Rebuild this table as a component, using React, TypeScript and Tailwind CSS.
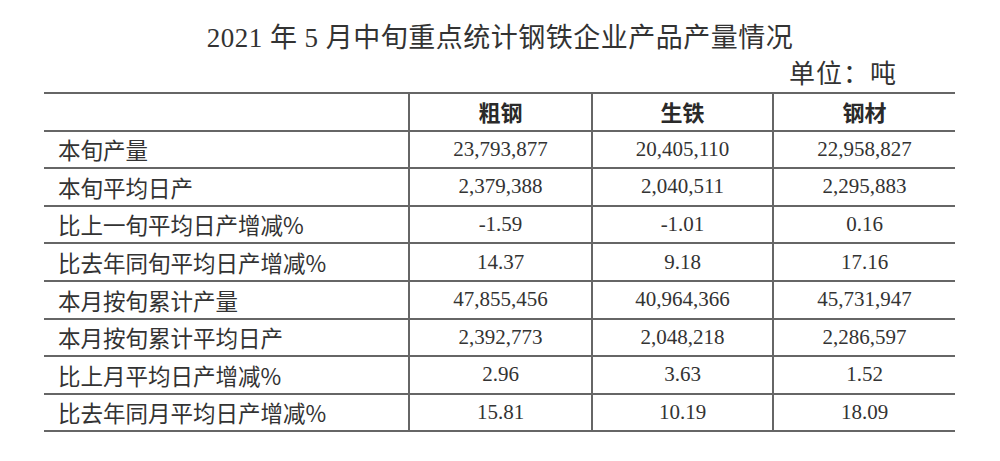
const COLS = ["粗钢", "生铁", "钢材"];

const ROWS: [string, string, string, string][] = [
  ["本旬产量", "23,793,877", "20,405,110", "22,958,827"],
  ["本旬平均日产", "2,379,388", "2,040,511", "2,295,883"],
  ["比上一旬平均日产增减%", "-1.59", "-1.01", "0.16"],
  ["比去年同旬平均日产增减%", "14.37", "9.18", "17.16"],
  ["本月按旬累计产量", "47,855,456", "40,964,366", "45,731,947"],
  ["本月按旬累计平均日产", "2,392,773", "2,048,218", "2,286,597"],
  ["比上月平均日产增减%", "2.96", "3.63", "1.52"],
  ["比去年同月平均日产增减%", "15.81", "10.19", "18.09"],
];

const serif = "font-['Liberation_Serif','Noto_Sans_CJK_SC',serif]";
const sans = "font-['Noto_Sans_CJK_SC','Liberation_Sans',sans-serif]";

export default function App() {
  return (
    <div className="w-[1000px] h-[461px] bg-white text-[#333] overflow-hidden">
      {/* Title */}
      <div className="pt-[24px] h-[52px] flex justify-center">
        <h1 className={`${serif} text-[27px] leading-[28px] font-normal tracking-[0.5px]`}>
          2021 年 5 月中旬重点统计钢铁企业产品产量情况
        </h1>
      </div>
      <div className="h-[40px] flex justify-end items-center pr-[103px] pt-[5px]">
        <span className={`${serif} text-[26px] leading-none tracking-[1px]`}>单位：吨</span>
      </div>

      {/* Table */}
      <div className="ml-[44px] w-[911px]">
        <table className="w-full border-collapse table-fixed">
          <colgroup>
            <col className="w-[365px]" />
            <col className="w-[183px]" />
            <col className="w-[181px]" />
            <col className="w-[182px]" />
          </colgroup>
          <thead>
            <tr className="h-[37.6px] border-t-2 border-b-2 border-[#666]">
              <th className="border-r-2 border-[#666]" />
              {COLS.map((c, i) => (
                <th
                  key={c}
                  className={`${sans} text-[22px] font-bold text-[#2a2a2a] text-center p-0 ${
                    i < 2 ? "border-r-2 border-[#666]" : ""
                  }`}
                >
                  {c}
                </th>
              ))}
            </tr>
          </thead>
          <tbody>
            {ROWS.map((r) => (
              <tr key={r[0]} className="h-[37.6px] border-b-2 border-[#666]">
                <td
                  className={`${sans} text-[22.5px] pl-[14px] p-0 leading-none border-r-2 border-[#666] whitespace-nowrap`}
                >
                  {r[0]}
                </td>
                {r.slice(1).map((v, i) => (
                  <td
                    key={i}
                    className={`${serif} text-[21px] text-center p-0 leading-none ${
                      i < 2 ? "border-r-2 border-[#666]" : ""
                    }`}
                  >
                    {v}
                  </td>
                ))}
              </tr>
            ))}
          </tbody>
        </table>
      </div>
    </div>
  );
}
